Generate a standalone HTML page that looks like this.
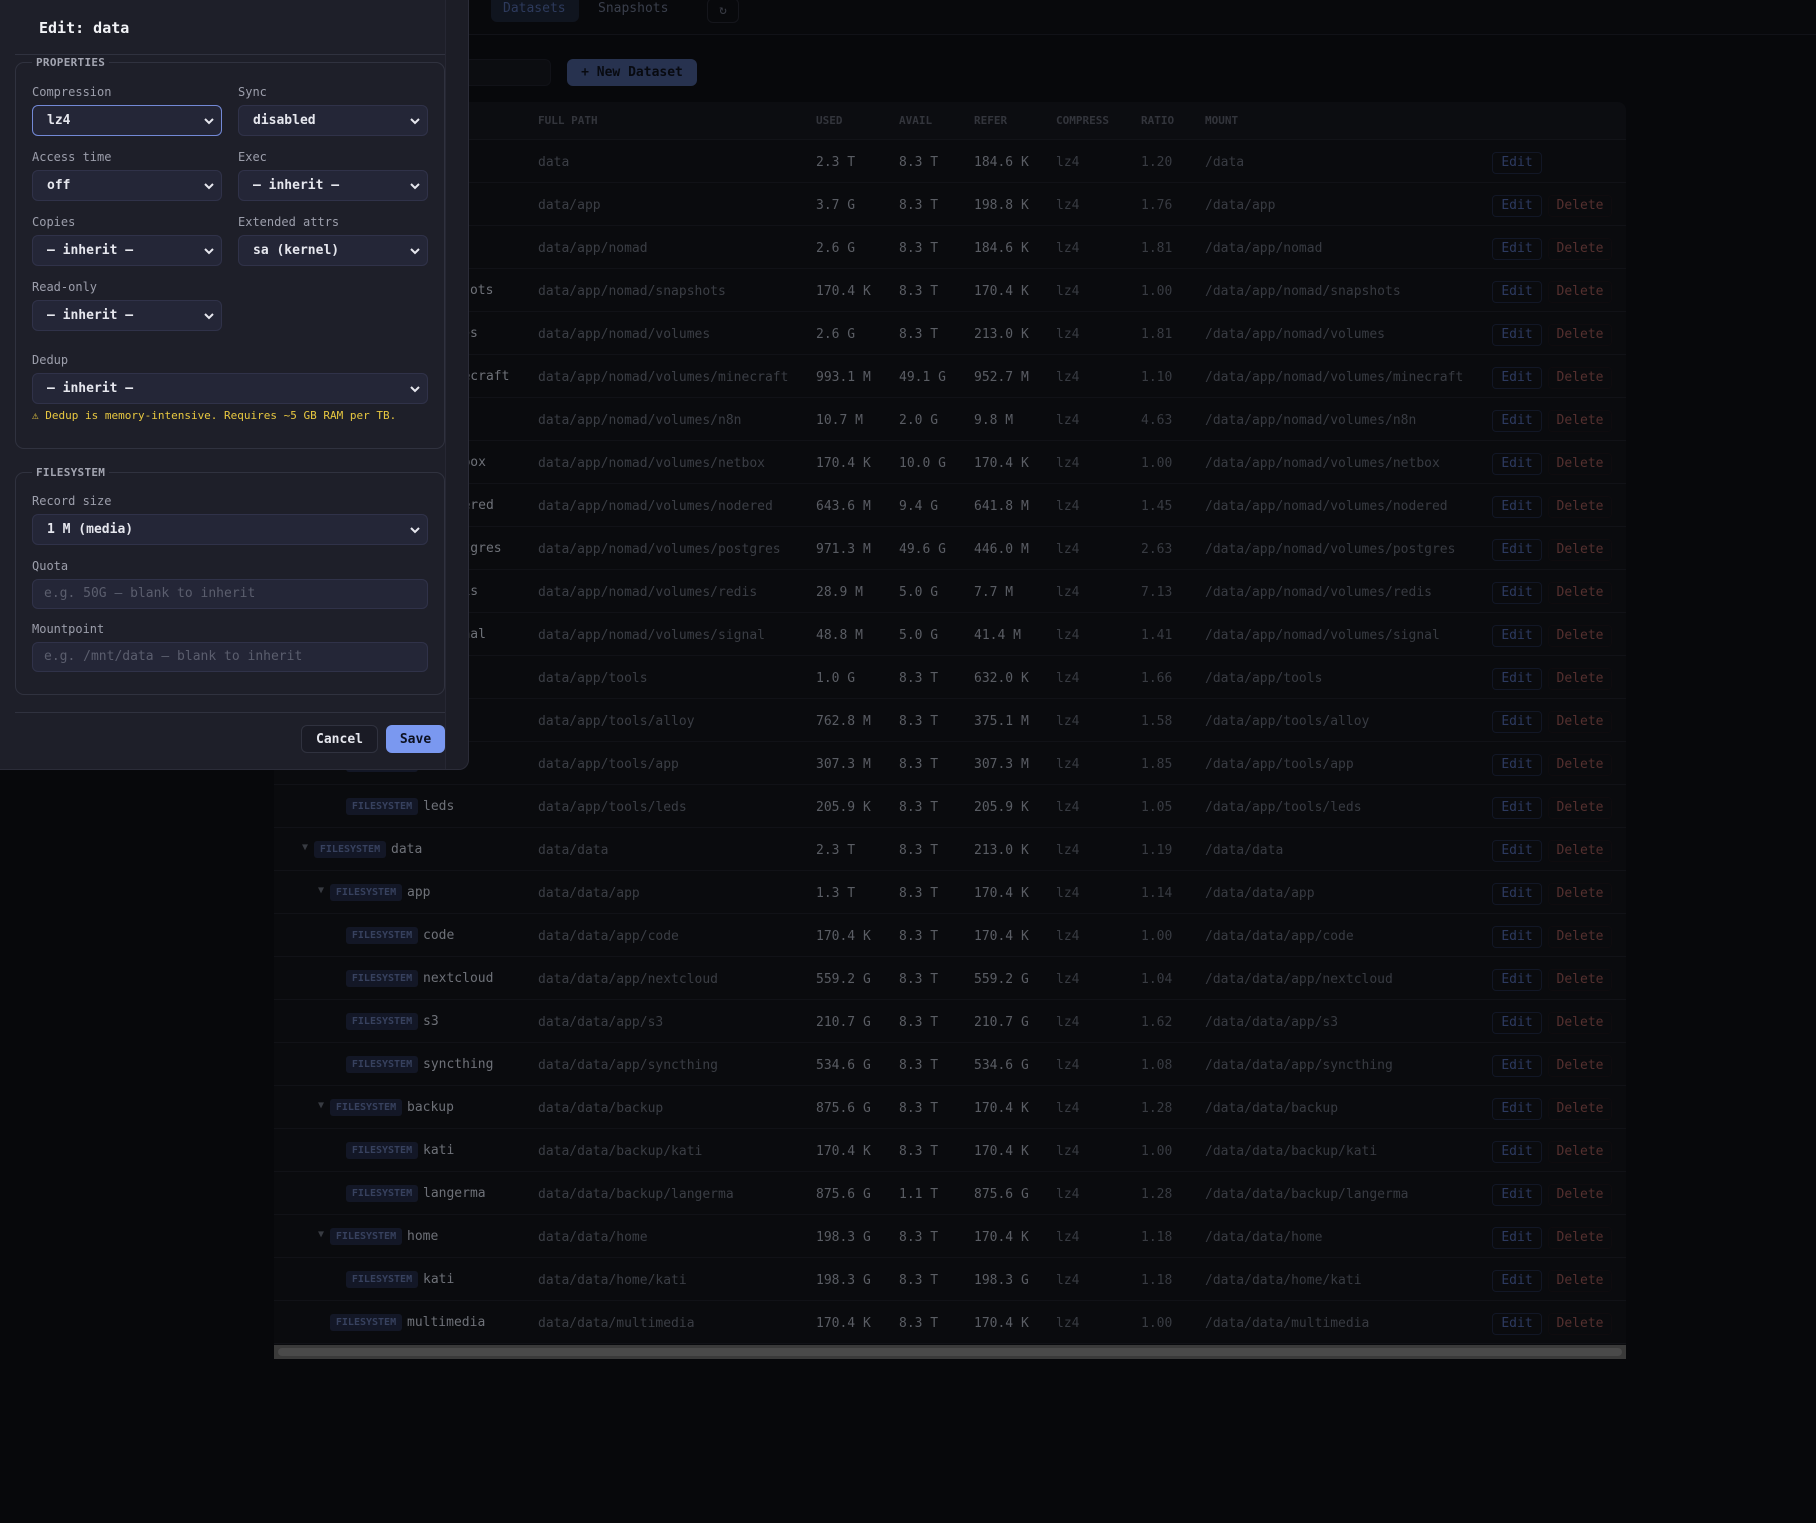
<!DOCTYPE html>
<html><head><meta charset="utf-8"><style>
*{box-sizing:border-box;margin:0;padding:0}
body{width:1816px;height:1523px;background:#07080b;overflow:hidden;position:relative;font-family:"DejaVu Sans Mono","Liberation Mono",monospace}
.abs{position:absolute}
.topbar{left:0;top:0;width:1816px;height:35px;border-bottom:1px solid #111218;background:#08090c}
.tab{top:0;height:22px;font-size:13px;line-height:18px;color:#3a3f4c}
.tbl{left:274px;top:102px;width:1352px;height:1243px;background:#0a0b0e;border-radius:8px 8px 0 0;overflow:hidden}
.hdr{left:0;top:0;width:1352px;height:38px;background:#0c0d11;border-bottom:1px solid #121318}
.h{top:12px;font-size:11px;font-weight:bold;color:#33353c}
.row{left:0;width:1352px;height:43px;border-bottom:1px solid #111217}
.c{top:14px;font-size:13px;line-height:18px;white-space:nowrap}
.p{color:#3b3e45}.v{color:#5a5d64}.m{color:#383b42}.n{color:#6e7178}
.b{top:13px;height:17px;width:72px;background:#131726;border-radius:3px;font-size:10px;font-weight:bold;color:#37415e;text-align:center;line-height:17px}
.ar{top:14px;font-size:10px;color:#383b42}
.ed{left:1218px;top:12px;width:50px;height:22px;border:1px solid #121726;border-radius:4px;color:#2d3a60;font-size:13px;text-align:center;line-height:20px}
.dl{left:1274px;top:12px;width:64px;height:22px;border:1px solid #0f0c0f;border-radius:4px;color:#55302f;font-size:13px;text-align:center;line-height:20px}
.modal{left:0;top:0;width:469px;height:770px;background:#1e1f29;border-radius:0 0 10px 0;border-right:1px solid #2b2c38;border-bottom:1px solid #2b2c38}
.lbl{font-size:12px;color:#9c9eab}
.sel{height:31px;background:#242637;border:1px solid #303249;border-radius:6px;font-size:13px;font-weight:bold;color:#e6e7ee;padding-left:14px;line-height:29px}
.sel svg{position:absolute;right:6px;top:10px}
.inp{height:30px;background:#242637;border:1px solid #303249;border-radius:6px;font-size:13px;color:#5b5e6e;padding-left:11px;line-height:28px}
.fs{border:1px solid #30323f;border-radius:9px}
.lg{font-size:11px;font-weight:bold;color:#a3a5b1;background:#1e1f29;padding:0 4px;letter-spacing:.3px}
</style></head><body>
<div class="abs topbar"></div>
<div class="abs" style="left:491px;top:0;width:88px;height:22px;background:#10151f;border-radius:0 0 6px 6px"></div>
<div class="abs tab" style="left:503px;color:#2d3a5c">Datasets</div>
<div class="abs tab" style="left:598px">Snapshots</div>
<div class="abs" style="left:707px;top:-2px;width:32px;height:25px;border:1px solid #15161c;border-radius:6px;color:#3a3d46;font-size:13px;text-align:center;line-height:24px">↻</div>
<div class="abs" style="left:420px;top:59px;width:131px;height:27px;background:#0c0d11;border:1px solid #111218;border-radius:6px"></div>
<div class="abs" style="left:567px;top:59px;width:130px;height:27px;background:#27324f;border-radius:6px;font-size:13px;font-weight:bold;color:#080a10;text-align:center;line-height:28px">+ New Dataset</div>

<div class="abs tbl">
<div class="abs hdr">
<div class="abs h" style="left:264px">FULL PATH</div>
<div class="abs h" style="left:542px">USED</div>
<div class="abs h" style="left:625px">AVAIL</div>
<div class="abs h" style="left:700px">REFER</div>
<div class="abs h" style="left:782px">COMPRESS</div>
<div class="abs h" style="left:867px">RATIO</div>
<div class="abs h" style="left:931px">MOUNT</div>
</div>
<div id="rows"></div>
</div>
<div class="abs" style="left:274px;top:1345px;width:1352px;height:14px;background:#3a3a3a"></div>
<div class="abs" style="left:278px;top:1348px;width:1344px;height:8px;background:#4a4a4a;border-radius:4px"></div>

<div class="abs modal">
<div class="abs" style="left:445px;top:0;width:23px;height:769px;background:#1c1d26;border-left:1px solid #262733;border-radius:0 0 10px 0"></div>
<div class="abs" style="left:39px;top:19px;font-size:15px;font-weight:bold;color:#f2f3f7">Edit: data</div>
<div class="abs" style="left:15px;top:54px;width:430px;height:1px;background:#30323f"></div>
<div class="abs fs" style="left:15px;top:62px;width:430px;height:387px"></div>
<div class="abs lg" style="left:32px;top:56px">PROPERTIES</div>
<div class="abs lbl" style="left:32px;top:85px">Compression</div>
<div class="abs lbl" style="left:238px;top:85px">Sync</div>
<div class="abs sel" style="left:32px;top:105px;width:190px;border-color:#7389d6">lz4<svg width="12" height="10"><path d="M2 3l4 4 4-4" stroke="#e6e7ee" stroke-width="2" fill="none"/></svg></div>
<div class="abs sel" style="left:238px;top:105px;width:190px">disabled<svg width="12" height="10"><path d="M2 3l4 4 4-4" stroke="#e6e7ee" stroke-width="2" fill="none"/></svg></div>
<div class="abs lbl" style="left:32px;top:150px">Access time</div>
<div class="abs lbl" style="left:238px;top:150px">Exec</div>
<div class="abs sel" style="left:32px;top:170px;width:190px">off<svg width="12" height="10"><path d="M2 3l4 4 4-4" stroke="#e6e7ee" stroke-width="2" fill="none"/></svg></div>
<div class="abs sel" style="left:238px;top:170px;width:190px">— inherit —<svg width="12" height="10"><path d="M2 3l4 4 4-4" stroke="#e6e7ee" stroke-width="2" fill="none"/></svg></div>
<div class="abs lbl" style="left:32px;top:215px">Copies</div>
<div class="abs lbl" style="left:238px;top:215px">Extended attrs</div>
<div class="abs sel" style="left:32px;top:235px;width:190px">— inherit —<svg width="12" height="10"><path d="M2 3l4 4 4-4" stroke="#e6e7ee" stroke-width="2" fill="none"/></svg></div>
<div class="abs sel" style="left:238px;top:235px;width:190px">sa (kernel)<svg width="12" height="10"><path d="M2 3l4 4 4-4" stroke="#e6e7ee" stroke-width="2" fill="none"/></svg></div>
<div class="abs lbl" style="left:32px;top:280px">Read-only</div>
<div class="abs sel" style="left:32px;top:300px;width:190px">— inherit —<svg width="12" height="10"><path d="M2 3l4 4 4-4" stroke="#e6e7ee" stroke-width="2" fill="none"/></svg></div>
<div class="abs lbl" style="left:32px;top:353px">Dedup</div>
<div class="abs sel" style="left:32px;top:373px;width:396px">— inherit —<svg width="12" height="10"><path d="M2 3l4 4 4-4" stroke="#e6e7ee" stroke-width="2" fill="none"/></svg></div>
<div class="abs" style="left:32px;top:409px;font-size:11px;color:#e8c840">⚠ Dedup is memory-intensive. Requires ~5 GB RAM per TB.</div>

<div class="abs fs" style="left:15px;top:472px;width:430px;height:223px"></div>
<div class="abs lg" style="left:32px;top:466px">FILESYSTEM</div>
<div class="abs lbl" style="left:32px;top:494px">Record size</div>
<div class="abs sel" style="left:32px;top:514px;width:396px">1 M (media)<svg width="12" height="10"><path d="M2 3l4 4 4-4" stroke="#e6e7ee" stroke-width="2" fill="none"/></svg></div>
<div class="abs lbl" style="left:32px;top:559px">Quota</div>
<div class="abs inp" style="left:32px;top:579px;width:396px">e.g. 50G — blank to inherit</div>
<div class="abs lbl" style="left:32px;top:622px">Mountpoint</div>
<div class="abs inp" style="left:32px;top:642px;width:396px">e.g. /mnt/data — blank to inherit</div>
<div class="abs" style="left:15px;top:712px;width:430px;height:1px;background:#30323f"></div>
<div class="abs" style="left:301px;top:725px;width:77px;height:28px;background:#1a1b25;border:1px solid #30323f;border-radius:6px;font-size:13px;font-weight:bold;color:#e6e7ee;text-align:center;line-height:27px">Cancel</div>
<div class="abs" style="left:386px;top:725px;width:59px;height:28px;background:#7a98f0;border-radius:6px;font-size:13px;font-weight:bold;color:#0c1020;text-align:center;line-height:29px">Save</div>
</div>

<script>
var R=[
[0,1,'data','data','2.3 T','8.3 T','184.6 K','1.20','/data',0],
[1,1,'app','data/app','3.7 G','8.3 T','198.8 K','1.76','/data/app',1],
[2,1,'nomad','data/app/nomad','2.6 G','8.3 T','184.6 K','1.81','/data/app/nomad',1],
[3,0,'snapshots','data/app/nomad/snapshots','170.4 K','8.3 T','170.4 K','1.00','/data/app/nomad/snapshots',1],
[3,1,'volumes','data/app/nomad/volumes','2.6 G','8.3 T','213.0 K','1.81','/data/app/nomad/volumes',1],
[4,0,'minecraft','data/app/nomad/volumes/minecraft','993.1 M','49.1 G','952.7 M','1.10','/data/app/nomad/volumes/minecraft',1],
[4,0,'n8n','data/app/nomad/volumes/n8n','10.7 M','2.0 G','9.8 M','4.63','/data/app/nomad/volumes/n8n',1],
[4,0,'netbox','data/app/nomad/volumes/netbox','170.4 K','10.0 G','170.4 K','1.00','/data/app/nomad/volumes/netbox',1],
[4,0,'nodered','data/app/nomad/volumes/nodered','643.6 M','9.4 G','641.8 M','1.45','/data/app/nomad/volumes/nodered',1],
[4,0,'postgres','data/app/nomad/volumes/postgres','971.3 M','49.6 G','446.0 M','2.63','/data/app/nomad/volumes/postgres',1],
[4,0,'redis','data/app/nomad/volumes/redis','28.9 M','5.0 G','7.7 M','7.13','/data/app/nomad/volumes/redis',1],
[4,0,'signal','data/app/nomad/volumes/signal','48.8 M','5.0 G','41.4 M','1.41','/data/app/nomad/volumes/signal',1],
[2,1,'tools','data/app/tools','1.0 G','8.3 T','632.0 K','1.66','/data/app/tools',1],
[3,0,'alloy','data/app/tools/alloy','762.8 M','8.3 T','375.1 M','1.58','/data/app/tools/alloy',1],
[3,0,'app','data/app/tools/app','307.3 M','8.3 T','307.3 M','1.85','/data/app/tools/app',1],
[3,0,'leds','data/app/tools/leds','205.9 K','8.3 T','205.9 K','1.05','/data/app/tools/leds',1],
[1,1,'data','data/data','2.3 T','8.3 T','213.0 K','1.19','/data/data',1],
[2,1,'app','data/data/app','1.3 T','8.3 T','170.4 K','1.14','/data/data/app',1],
[3,0,'code','data/data/app/code','170.4 K','8.3 T','170.4 K','1.00','/data/data/app/code',1],
[3,0,'nextcloud','data/data/app/nextcloud','559.2 G','8.3 T','559.2 G','1.04','/data/data/app/nextcloud',1],
[3,0,'s3','data/data/app/s3','210.7 G','8.3 T','210.7 G','1.62','/data/data/app/s3',1],
[3,0,'syncthing','data/data/app/syncthing','534.6 G','8.3 T','534.6 G','1.08','/data/data/app/syncthing',1],
[2,1,'backup','data/data/backup','875.6 G','8.3 T','170.4 K','1.28','/data/data/backup',1],
[3,0,'kati','data/data/backup/kati','170.4 K','8.3 T','170.4 K','1.00','/data/data/backup/kati',1],
[3,0,'langerma','data/data/backup/langerma','875.6 G','1.1 T','875.6 G','1.28','/data/data/backup/langerma',1],
[2,1,'home','data/data/home','198.3 G','8.3 T','170.4 K','1.18','/data/data/home',1],
[3,0,'kati','data/data/home/kati','198.3 G','8.3 T','198.3 G','1.18','/data/data/home/kati',1],
[2,0,'multimedia','data/data/multimedia','170.4 K','8.3 T','170.4 K','1.00','/data/data/multimedia',1]];
var h='';
R.forEach(function(r,i){
 var ax=286+16*r[0]-274, bx=ax+12;
 h+='<div class="abs row" style="top:'+(38+43*i)+'px">';
 if(r[1])h+='<div class="abs ar" style="left:'+ax+'px">▼</div>';
 h+='<div class="abs b" style="left:'+bx+'px">FILESYSTEM</div>';
 h+='<div class="abs c n" style="left:'+(bx+77)+'px;top:13px">'+r[2]+'</div>';
 h+='<div class="abs c p" style="left:264px">'+r[3]+'</div>';
 h+='<div class="abs c v" style="left:542px">'+r[4]+'</div>';
 h+='<div class="abs c v" style="left:625px">'+r[5]+'</div>';
 h+='<div class="abs c v" style="left:700px">'+r[6]+'</div>';
 h+='<div class="abs c m" style="left:782px">lz4</div>';
 h+='<div class="abs c m" style="left:867px">'+r[7]+'</div>';
 h+='<div class="abs c m" style="left:931px">'+r[8]+'</div>';
 h+='<div class="abs ed">Edit</div>';
 if(r[9])h+='<div class="abs dl">Delete</div>';
 h+='</div>';
});
document.getElementById('rows').innerHTML=h;
</script>
</body></html>
